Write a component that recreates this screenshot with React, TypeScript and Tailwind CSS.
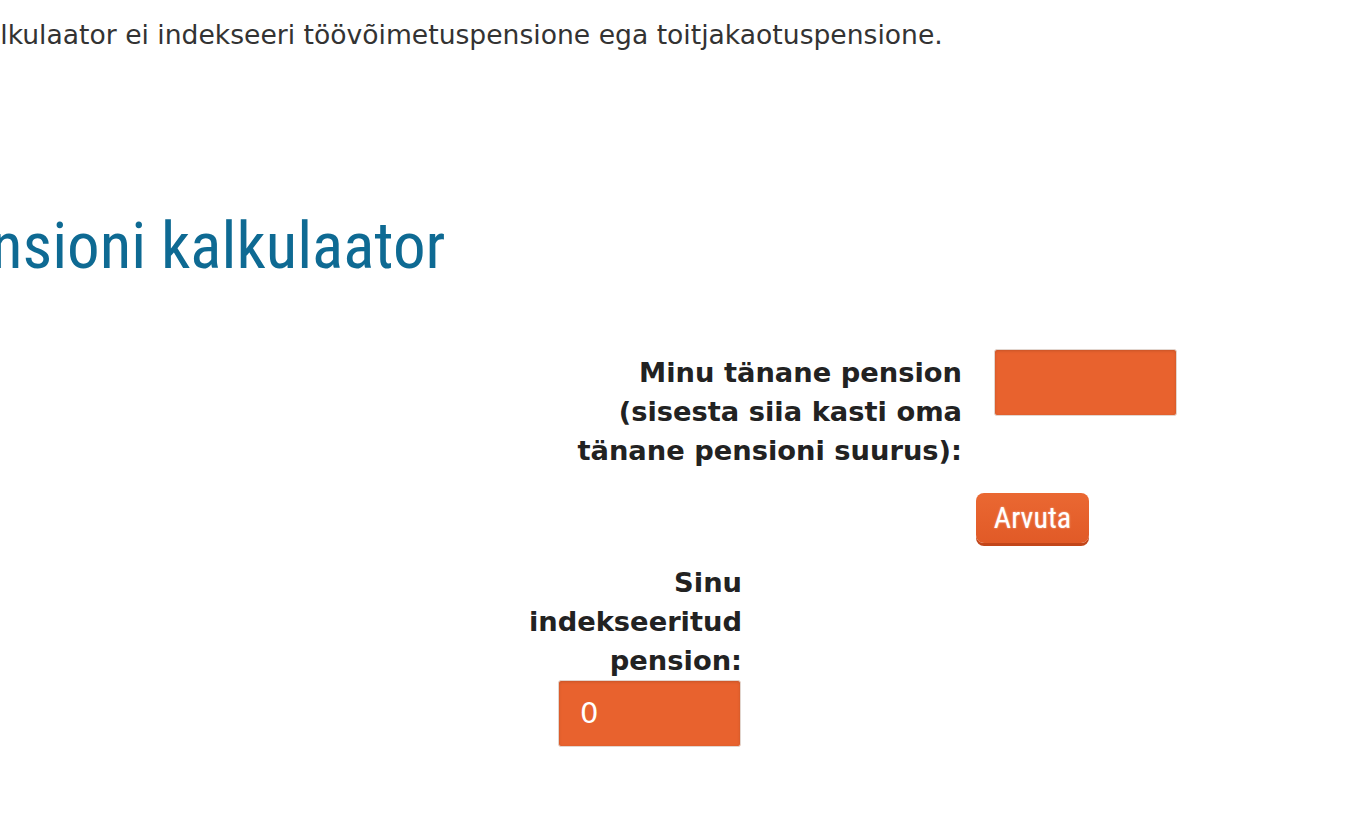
const body = '"DejaVu Sans", Tahoma, Verdana, sans-serif';
const narrow = '"Roboto Condensed", "Liberation Sans Narrow", Roboto, sans-serif';

export default function App() {
  return (
    <div className="h-[820px] w-[1370px] overflow-hidden bg-white text-[#2b2b2b]">
      <p
        className="-ml-[33px] whitespace-nowrap pt-[17px] text-[26.6px] leading-[36px] text-[#333]"
        style={{ fontFamily: body }}
      >
        Kalkulaator ei indekseeri töövõimetuspensione ega toitjakaotuspensione.
      </p>
      <h2
        className="-ml-[75px] mt-[157px] whitespace-nowrap text-[65px] leading-[72px] text-[#0e6a93]"
        style={{ fontFamily: narrow }}
      >
        Pensioni kalkulaator
      </h2>

      <div className="mt-[67px]" style={{ fontFamily: body }}>
        <div className="flex items-start">
          <label className="ml-[567px] mt-[4px] w-[395px] text-right text-[27.3px] font-bold leading-[39px] text-[#222]">
            Minu tänane pension (sisesta siia kasti oma tänane pensioni suurus):
          </label>
          <input
            className="ml-[32px] h-[67px] w-[183px] rounded-[3px] border border-[#e2d6cf] bg-[#e8622e] px-4 text-[28px] text-white shadow-[inset_0_1px_3px_rgba(0,0,0,0.15)] outline-none"
            type="text"
          />
        </div>

        <button
          className="ml-[976px] mt-[23px] h-[50px] w-[113px] rounded-lg bg-gradient-to-b from-[#ea6832] to-[#e15a27] pb-[2px] text-[30px] text-white shadow-[0_3px_0_#c2461a] [text-shadow:0_0_2px_rgba(255,255,255,0.6)]"
          style={{ fontFamily: narrow }}
        >
          Arvuta
        </button>

        <div className="ml-[520px] mt-[20px] w-[222px] text-right text-[27.3px] font-bold leading-[39px] text-[#222]">
          Sinu indekseeritud pension:
        </div>
        <div className="ml-[558px] flex h-[67px] w-[183px] items-center rounded-[3px] border border-[#e2d6cf] bg-[#e8622e] pl-[21px] text-[29px] text-white shadow-[inset_0_1px_3px_rgba(0,0,0,0.15)]">
          0
        </div>
      </div>
    </div>
  );
}
